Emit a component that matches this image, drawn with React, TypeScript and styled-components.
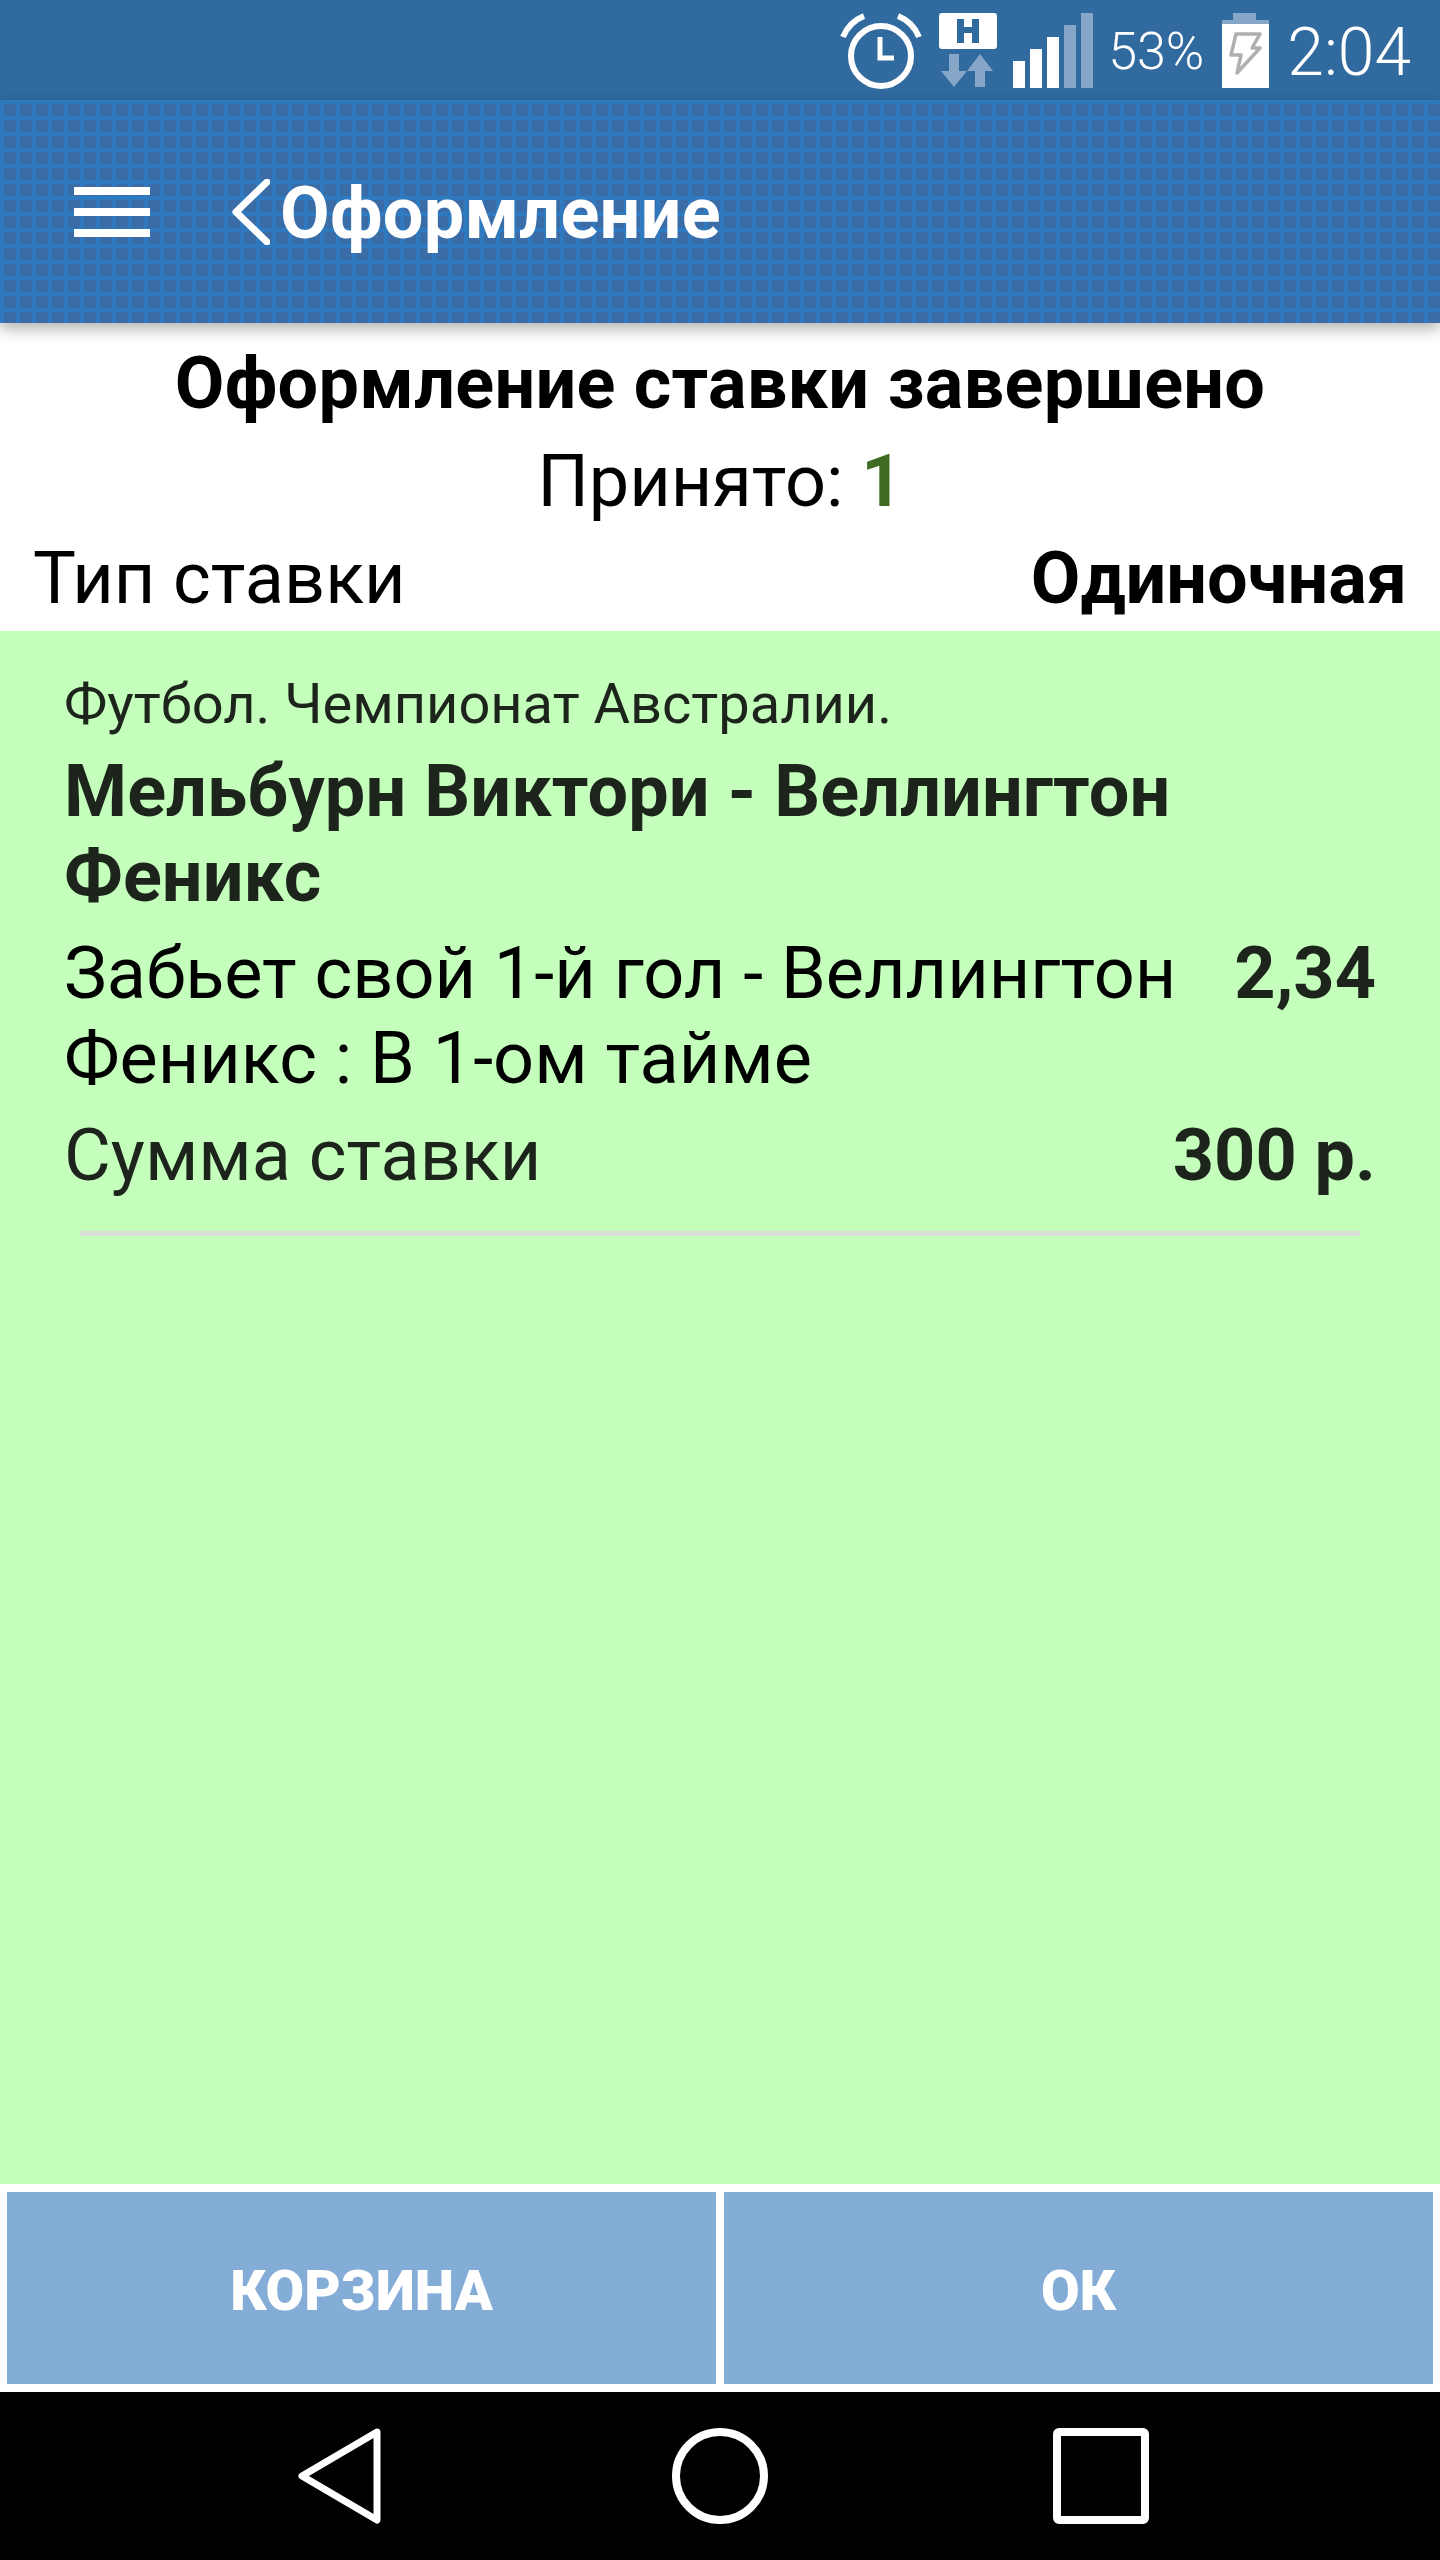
import React from "react"
import styled, { createGlobalStyle } from "styled-components"

const GlobalStyle = createGlobalStyle`
  html, body {
    margin: 0;
    padding: 0;
    background: #fff;
    font-family: Roboto, "Liberation Sans", sans-serif;
  }
`

const App = () => {
  return (
    <Screen>
      <GlobalStyle />
      <StatusBar>
        <AlarmIcon />
        <NetworkIcon />
        <SignalIcon />
        <Percent>53%</Percent>
        <BatteryIcon />
        <Clock>2:04</Clock>
      </StatusBar>

      <Toolbar>
        <Burger>
          <span />
          <span />
          <span />
        </Burger>
        <Chevron viewBox="0 0 38 66">
          <path d="M35 3 L4 33 L35 63" fill="none" stroke="#fff" strokeWidth="7" strokeLinecap="round" strokeLinejoin="round" />
        </Chevron>
        <ToolbarTitle>Оформление</ToolbarTitle>
      </Toolbar>

      <Summary>
        <Heading>Оформление ставки завершено</Heading>
        <Accepted>
          Принято: <b>1</b>
        </Accepted>
        <TypeRow>
          <span>Тип ставки</span>
          <b>Одиночная</b>
        </TypeRow>
      </Summary>

      <Bet>
        <League>Футбол. Чемпионат Австралии.</League>
        <Match>Мельбурн Виктори - Веллингтон Феникс</Match>
        <OutcomeRow>
          <Outcome>Забьет свой 1-й гол - Веллингтон Феникс : В 1-ом тайме</Outcome>
          <Value>2,34</Value>
        </OutcomeRow>
        <AmountRow>
          <span>Сумма ставки</span>
          <Value>300 р.</Value>
        </AmountRow>
        <Divider />
      </Bet>

      <Actions>
        <ActionButton>КОРЗИНА</ActionButton>
        <ActionButton>ОК</ActionButton>
      </Actions>

      <NavBar>
        <NavIcon $width={84} viewBox="0 0 84 96">
          <path d="M79 4 L4 48 L79 92 Z" fill="none" stroke="#fff" strokeWidth="7" strokeLinejoin="round" />
        </NavIcon>
        <NavIcon $width={96} $left={290} viewBox="0 0 96 96">
          <circle cx="48" cy="48" r="44" fill="none" stroke="#fff" strokeWidth="8" />
        </NavIcon>
        <NavIcon $width={96} $left={285} viewBox="0 0 96 96">
          <rect x="4" y="4" width="88" height="88" rx="2" fill="none" stroke="#fff" strokeWidth="8" />
        </NavIcon>
      </NavBar>
    </Screen>
  )
}

const AlarmIcon = () => (
  <StatusSvg width={82} height={76} viewBox="0 0 82 76">
    <circle cx="41" cy="43" r="30" fill="none" stroke="#fff" strokeWidth="6" />
    <path d="M40 24 V45 H54" fill="none" stroke="#fff" strokeWidth="5" />
    <path d="M3 24 C7 14 14 7 24 3" fill="none" stroke="#fff" strokeWidth="6" />
    <path d="M79 24 C75 14 68 7 58 3" fill="none" stroke="#fff" strokeWidth="6" />
  </StatusSvg>
)

const NetworkIcon = () => (
  <StatusSvg $left={17} width={58} height={75} viewBox="0 0 58 75">
    <rect x="0" y="0" width="58" height="36" rx="3" fill="#fff" />
    <path d="M18 6 H25 V14 H33 V6 H40 V30 H33 V20 H25 V30 H18 Z" fill="#316a9e" />
    <path d="M10 41 H20 V58 H28 L15 74 L2 58 H10 Z" fill="#85a6c6" />
    <path d="M41 41 L54 58 H46 V74 H36 V58 H28 Z" fill="#85a6c6" />
  </StatusSvg>
)

const SignalIcon = () => (
  <StatusSvg $left={16} width={80} height={75} viewBox="0 0 80 75">
    <rect x="0" y="48" width="12" height="27" fill="#fff" />
    <rect x="17" y="36" width="12" height="39" fill="#fff" />
    <rect x="34" y="24" width="12" height="51" fill="#fff" />
    <rect x="51" y="12" width="12" height="63" fill="#85a6c6" />
    <rect x="68" y="0" width="12" height="75" fill="#85a6c6" />
  </StatusSvg>
)

const BatteryIcon = () => (
  <StatusSvg $left={18} width={47} height={75} viewBox="0 0 47 75">
    <rect x="11" y="0" width="23" height="7" fill="#85a6c6" />
    <rect x="0" y="7" width="47" height="4" fill="#85a6c6" />
    <rect x="0" y="11" width="47" height="64" fill="#fff" />
    <path
      d="M14 21 H38 L30 35 H38 L15 60 L19 42 H9 Z"
      fill="none"
      stroke="#b0b0b0"
      strokeWidth="3.5"
      strokeLinejoin="round"
    />
  </StatusSvg>
)

const Screen = styled.div`
  width: 1440px;
  height: 2560px;
  display: flex;
  flex-direction: column;
  background: #fff;
  overflow: hidden;
`

const StatusBar = styled.div`
  height: 100px;
  flex: none;
  box-sizing: border-box;
  padding: 13px 29px 0 0;
  display: flex;
  justify-content: flex-end;
  align-items: flex-start;
  background: #316a9e;
  color: #fff;
`

const StatusSvg = styled.svg<{ $left?: number }>`
  display: block;
  flex: none;
  margin-left: ${({ $left }) => $left || 0}px;
`

const Percent = styled.span`
  margin-left: 15px;
  font-size: 52px;
  font-weight: 300;
  line-height: 60px;
  padding-top: 9px;
`

const Clock = styled.span`
  margin-left: 18px;
  font-size: 66px;
  font-weight: 300;
  line-height: 64px;
  padding-top: 8px;
`

const Toolbar = styled.div`
  height: 223px;
  flex: none;
  display: flex;
  align-items: center;
  padding-left: 74px;
  position: relative;
  z-index: 1;
  background-color: #3a6ca8;
  background-image:
    repeating-linear-gradient(90deg, #2f79bf 0 4px, transparent 4px 16px),
    repeating-linear-gradient(180deg, #2f79bf 0 4px, transparent 4px 16px);
  box-shadow: 0 6px 14px rgba(0, 0, 0, 0.3);
`

const Burger = styled.div`
  width: 76px;
  display: flex;
  flex-direction: column;
  gap: 13px;

  span {
    display: block;
    height: 8px;
    background: #fff;
  }
`

const Chevron = styled.svg`
  width: 38px;
  height: 66px;
  margin-left: 82px;
`

const ToolbarTitle = styled.div`
  margin-left: 10px;
  padding-top: 3px;
  font-size: 72px;
  font-weight: 700;
  letter-spacing: 0.25px;
  color: #fff;
`

const Summary = styled.div`
  height: 308px;
  flex: none;
  box-sizing: border-box;
  padding-top: 12px;
  display: flex;
  flex-direction: column;
  color: #000;
`

const Heading = styled.div`
  height: 98px;
  line-height: 98px;
  text-align: center;
  font-size: 72px;
  font-weight: 700;
  letter-spacing: 0.25px;
`

const Accepted = styled.div`
  height: 98px;
  line-height: 98px;
  text-align: center;
  font-size: 72px;

  b {
    color: #3e6b1f;
  }
`

const TypeRow = styled.div`
  height: 96px;
  line-height: 96px;
  display: flex;
  justify-content: space-between;
  padding: 0 33px;
  font-size: 72px;
`

const Bet = styled.div`
  flex: 1;
  box-sizing: border-box;
  padding: 40px 64px 0;
  display: flex;
  flex-direction: column;
  background: #c4ffbc;
  color: #1c241c;
`

const League = styled.div`
  font-size: 56px;
  line-height: 66px;
`

const Match = styled.div`
  margin-top: 12px;
  font-size: 72px;
  font-weight: 700;
  line-height: 85px;
  letter-spacing: 0.1px;
`

const OutcomeRow = styled.div`
  margin-top: 12px;
  display: flex;
  justify-content: space-between;
  align-items: flex-start;
  font-size: 72px;
  line-height: 85px;
  color: #000;
`

const Outcome = styled.div`
  width: 1130px;
`

const Value = styled.b`
  font-size: 72px;
  color: #1c241c;
`

const AmountRow = styled.div`
  margin-top: 12px;
  display: flex;
  justify-content: space-between;
  font-size: 72px;
  line-height: 85px;
`

const Divider = styled.div`
  height: 5px;
  margin: 33px 16px 0;
  background: #dcdfd8;
`

const Actions = styled.div`
  height: 208px;
  flex: none;
  box-sizing: border-box;
  padding: 8px 7px;
  display: flex;
  gap: 8px;
`

const ActionButton = styled.div`
  flex: 1;
  display: flex;
  align-items: center;
  justify-content: center;
  padding-top: 5px;
  background: #83acd7;
  color: #fff;
  font-size: 56px;
  font-weight: 900;
`

const NavBar = styled.div`
  height: 168px;
  flex: none;
  box-sizing: border-box;
  padding: 36px 0 0 298px;
  display: flex;
  align-items: flex-start;
  background: #000;
`

const NavIcon = styled.svg<{ $width: number; $left?: number }>`
  height: 96px;
  flex: none;
  width: ${({ $width }) => $width}px;
  margin-left: ${({ $left }) => $left || 0}px;
`

export default App
